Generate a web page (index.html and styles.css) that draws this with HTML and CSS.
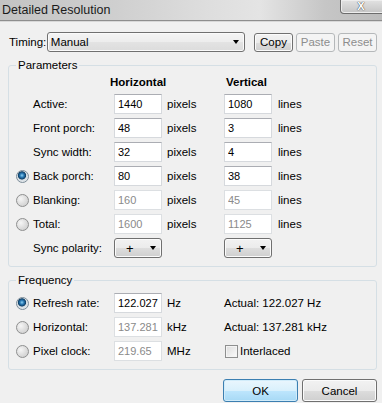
FILE: index.html
```html
<!DOCTYPE html>
<html lang="en">
<head>
    <meta charset="UTF-8">
    <title>Detailed Resolution</title>
    <link rel="stylesheet" href="styles.css">
</head>
<body>

<div class="window">
    <div class="titlebar">
        <span class="title">Detailed Resolution</span>
        <div class="close-btn">X</div>
    </div>

    <div class="content">
        <div class="timing-row">
            <label class="timing-label">Timing:</label>
            <div class="combo"><span>Manual</span><span class="arrow"></span></div>
            <div class="tool-buttons">
                <button class="btn">Copy</button>
                <button class="btn" disabled>Paste</button>
                <button class="btn" disabled>Reset</button>
            </div>
        </div>

        <div class="group">
            <span class="group-title">Parameters</span>
            <div class="grid params">
                <div></div>
                <div class="col-head head-h">Horizontal</div>
                <div></div>
                <div class="col-head head-v">Vertical</div>
                <div></div>

                <div class="row-label">Active:</div>
                <input class="field" type="text" value="1440">
                <div class="unit">pixels</div>
                <input class="field" type="text" value="1080">
                <div class="unit unit-v">lines</div>

                <div class="row-label">Front porch:</div>
                <input class="field" type="text" value="48">
                <div class="unit">pixels</div>
                <input class="field" type="text" value="3">
                <div class="unit unit-v">lines</div>

                <div class="row-label">Sync width:</div>
                <input class="field" type="text" value="32">
                <div class="unit">pixels</div>
                <input class="field" type="text" value="4">
                <div class="unit unit-v">lines</div>

                <label class="row-label has-radio"><input class="radio" type="radio" name="calc" checked>Back porch:</label>
                <input class="field" type="text" value="80">
                <div class="unit">pixels</div>
                <input class="field" type="text" value="38">
                <div class="unit unit-v">lines</div>

                <label class="row-label has-radio"><input class="radio" type="radio" name="calc">Blanking:</label>
                <input class="field" type="text" value="160" disabled>
                <div class="unit">pixels</div>
                <input class="field" type="text" value="45" disabled>
                <div class="unit unit-v">lines</div>

                <label class="row-label has-radio"><input class="radio" type="radio" name="calc">Total:</label>
                <input class="field" type="text" value="1600" disabled>
                <div class="unit">pixels</div>
                <input class="field" type="text" value="1125" disabled>
                <div class="unit unit-v">lines</div>

                <div class="row-label">Sync polarity:</div>
                <div class="polarity"><span class="sign">+</span><span class="arrow"></span></div>
                <div></div>
                <div class="polarity"><span class="sign">+</span><span class="arrow"></span></div>
                <div></div>
            </div>
        </div>

        <div class="group freq-group">
            <span class="group-title">Frequency</span>
            <div class="grid freq">
                <label class="row-label has-radio"><input class="radio" type="radio" name="freq" checked>Refresh rate:</label>
                <input class="field" type="text" value="122.027">
                <div class="unit">Hz</div>
                <div class="actual">Actual: 122.027 Hz</div>

                <label class="row-label has-radio"><input class="radio" type="radio" name="freq">Horizontal:</label>
                <input class="field" type="text" value="137.281" disabled>
                <div class="unit">kHz</div>
                <div class="actual">Actual: 137.281 kHz</div>

                <label class="row-label has-radio"><input class="radio" type="radio" name="freq">Pixel clock:</label>
                <input class="field" type="text" value="219.65" disabled>
                <div class="unit">MHz</div>
                <label class="actual check-label"><input class="check" type="checkbox">Interlaced</label>
            </div>
        </div>

        <div class="dialog-buttons">
            <button class="btn btn-big btn-default">OK</button>
            <button class="btn btn-big">Cancel</button>
        </div>
    </div>
</div>

</body>
</html>
```

FILE: styles.css
```css
body {
    margin: 0;
    padding: 0;
    background-color: #f0f0f0;
    font-family: "Liberation Sans", Arial, sans-serif;
    font-size: 11.5px;
    color: #000;
    overflow: hidden;
}

.window {
    width: 382px;
    height: 403px;
    overflow: hidden;
}

/* title bar */
.titlebar {
    height: 20px;
    display: flex;
    align-items: flex-start;
    background: linear-gradient(to right, #c3c3c3 0%, #cfcfcf 30%, #dedede 55%, #e4e4e4 68%, #c6c6c6 85%, #bcbcbc 100%);
    border-bottom: 1px solid #8e8e8e;
    box-shadow: 0 1px 0 #d8d8d8;
}

.title {
    font-size: 12.5px;
    line-height: 20px;
    padding-left: 2px;
    color: #1a1a1a;
}

.close-btn {
    margin-left: auto;
    margin-right: -6px;
    width: 48px;
    height: 14px;
    border: 1px solid #6c6c6c;
    border-top: none;
    border-radius: 0 0 4px 4px;
    background: linear-gradient(#e2e2e2, #c4c4c4);
    box-shadow: inset 0 0 0 1px #ededed;
    text-align: center;
    font-weight: bold;
    font-size: 11px;
    line-height: 13px;
    color: #fff;
    text-shadow: 0 0 1px #444, 0 0 1px #444;
    box-sizing: border-box;
    padding-right: 6px;
}

.content {
    padding: 11px 5px 0 8px;
}

/* timing row */
.timing-row {
    display: flex;
    align-items: center;
    height: 20px;
}

.timing-label {
    width: 38px;
    padding-left: 1px;
}

.combo {
    width: 199px;
    height: 20px;
    box-sizing: border-box;
    border: 1px solid #707070;
    border-radius: 3px;
    background: linear-gradient(#f4f4f4 0%, #ededed 50%, #e3e3e3 51%, #dcdcdc 100%);
    box-shadow: inset 0 0 0 1px #fafafa;
    display: flex;
    align-items: center;
    justify-content: space-between;
    padding: 0 5px 0 3px;
}

.arrow {
    width: 0;
    height: 0;
    border-left: 3.5px solid transparent;
    border-right: 3.5px solid transparent;
    border-top: 4px solid #000;
}

.tool-buttons {
    display: flex;
    gap: 3px;
    margin-left: 9px;
}

.btn {
    font-family: "Liberation Sans", Arial, sans-serif;
    font-size: 11.5px;
    color: #000;
    width: 39px;
    height: 19px;
    padding: 0;
    border: 1px solid #707070;
    border-radius: 3px;
    background: linear-gradient(#f2f2f2 0%, #ebebeb 50%, #dddddd 51%, #cfcfcf 100%);
    box-shadow: inset 0 0 0 1px #fbfbfb;
}

.btn:disabled {
    color: #8d8d8d;
    border-color: #b5b8ba;
    background: #f4f4f4;
    box-shadow: none;
}

/* group boxes */
.group {
    margin-top: 13px;
    border: 1px solid #d5dfe5;
    border-radius: 3px;
    padding-bottom: 8px;
}

.group-title {
    display: block;
    width: max-content;
    margin: -8px 0 0 7px;
    padding: 0 2px;
    line-height: 14px;
    background-color: #f0f0f0;
}

.grid {
    display: grid;
    grid-template-columns: 105px 48px 62px 48px 1fr;
    grid-auto-rows: 20px;
    row-gap: 4px;
    align-items: center;
}

.params {
    margin-top: 3px;
    grid-template-rows: 15px;
}

.freq {
    margin-top: 6px;
}

.col-head {
    font-weight: bold;
    align-self: start;
    line-height: 14px;
}

.head-h {
    margin-left: -4px;
}

.head-v {
    margin-left: 2px;
}

.row-label {
    padding-left: 24px;
    display: flex;
    align-items: center;
}

.row-label.has-radio {
    padding-left: 7px;
}

.field {
    width: 48px;
    height: 20px;
    box-sizing: border-box;
    margin: 0;
    padding: 0 2px 0 3px;
    border: 1px solid #d6d9dd;
    border-top-color: #abadb3;
    background: #fff;
    font-family: "Liberation Sans", Arial, sans-serif;
    font-size: 11px;
    color: #000;
}

.field:disabled {
    color: #8a8a8a;
    border-color: #dcdfe2;
    background: #fff;
}

.unit {
    padding-left: 5px;
}

.unit-v {
    padding-left: 6px;
}

.radio {
    appearance: none;
    width: 13px;
    height: 13px;
    margin: 0 4px 0 0;
    border: 1px solid #8e8f8f;
    border-radius: 50%;
    box-sizing: border-box;
    background: radial-gradient(circle at 35% 35%, #f6f6f6 0%, #e0e0e0 45%, #c8c8c8 100%);
}

.radio:checked {
    border-color: #7c8c98;
    background: radial-gradient(circle at 45% 40%, #8fd2f2 0%, #2a7ab5 22%, #0f3f66 42%, #d7dee3 50%, #eef1f3 100%);
}

.polarity {
    width: 48px;
    height: 20px;
    box-sizing: border-box;
    border: 1px solid #707070;
    border-radius: 3px;
    background: linear-gradient(#f2f2f2 0%, #ebebeb 50%, #dddddd 51%, #cfcfcf 100%);
    box-shadow: inset 0 0 0 1px #fbfbfb;
    display: flex;
    align-items: center;
    padding: 0 5px 0 11px;
    justify-content: space-between;
}

.sign {
    font-size: 13px;
}

.actual {
    grid-column: 4 / 6;
}

.check-label {
    display: flex;
    align-items: center;
    padding-left: 1px;
}

.check {
    appearance: none;
    width: 13px;
    height: 13px;
    margin: 0 2px 0 0;
    border: 1px solid #8e8f8f;
    box-sizing: border-box;
    background: linear-gradient(135deg, #dcdcdc, #fbfbfb);
    box-shadow: inset 0 0 0 1px #f4f4f4;
}

/* OK / Cancel */
.dialog-buttons {
    display: flex;
    justify-content: flex-end;
    gap: 4px;
    margin-top: 9px;
}

.btn-big {
    width: 75px;
    height: 23px;
}

.btn-default {
    border-color: #3c7fb1;
    background: linear-gradient(#eaf6fd 0%, #d9f0fc 50%, #bee6fd 51%, #a7d9f5 100%);
    box-shadow: inset 0 0 0 1px #d1ecfa;
}
```
